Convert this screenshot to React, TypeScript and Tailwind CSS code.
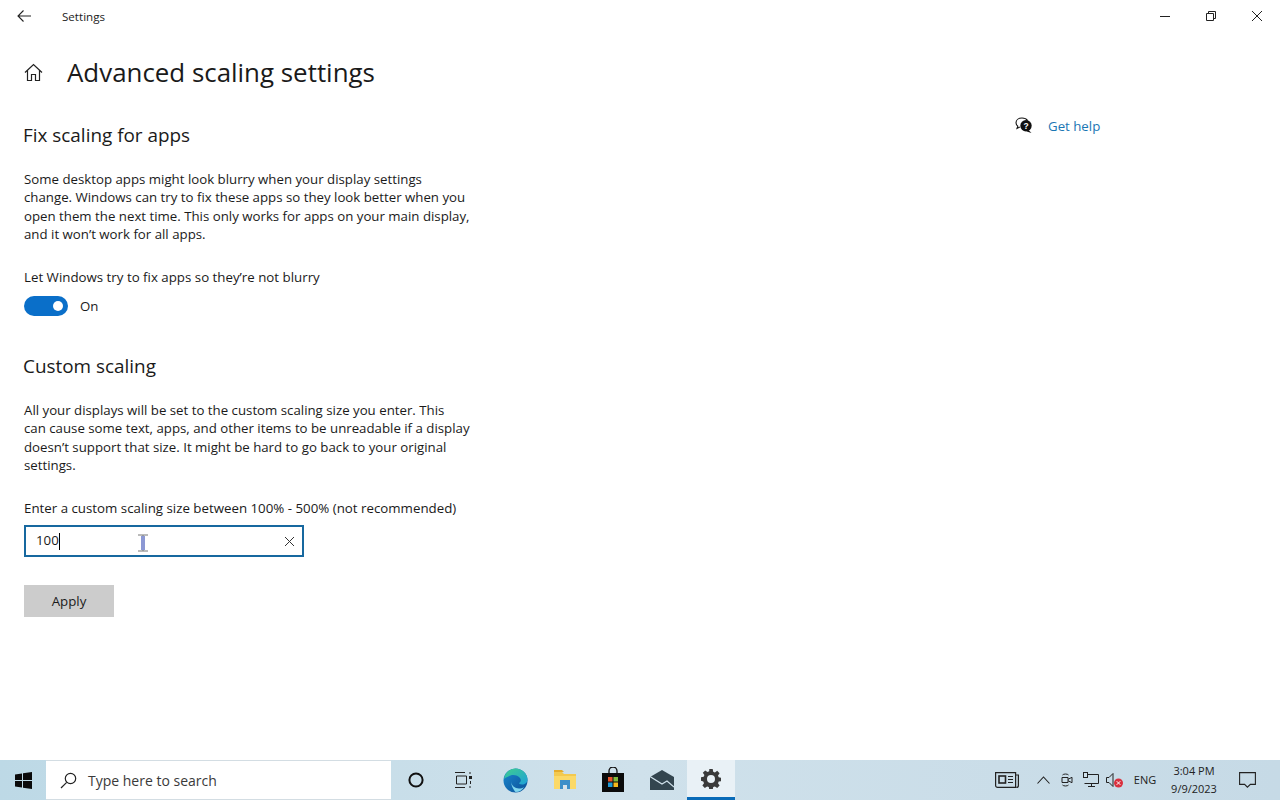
import React from "react";

const Para = ({ lines }: { lines: string[] }) => (
  <p className="text-[13.25px] leading-[18.4px] text-[#1a1a1a]">
    {lines.map((l) => (
      <span key={l} className="block whitespace-nowrap">{l}</span>
    ))}
  </p>
);

const Slot = ({ w, children, className = "" }: { w: string; children: React.ReactNode; className?: string }) => (
  <div className={`flex h-full shrink-0 items-center justify-center ${w} ${className}`}>{children}</div>
);

export default function App() {
  return (
    <div className="flex h-[800px] w-[1280px] flex-col overflow-hidden bg-white font-['Open_Sans','Noto_Sans',sans-serif] text-[#1a1a1a]">
      {/* title bar */}
      <div className="flex h-8 shrink-0 items-center">
        <Slot w="w-[48px]">
          <svg width="16" height="14" viewBox="0 0 16 14" fill="none" stroke="#222" strokeWidth="1.1"><path d="M15 7H2M7.5 1.5 2 7l5.5 5.5" /></svg>
        </Slot>
        <span className="ml-[14px] mt-[2px] text-[11.6px] text-[#222]">Settings</span>
        <div className="ml-auto flex h-full">
          <Slot w="w-[46px]"><svg width="12" height="12" viewBox="0 0 12 12" stroke="#222" strokeWidth="1"><path d="M1 6.5h10" /></svg></Slot>
          <Slot w="w-[46px]">
            <svg width="12" height="12" viewBox="0 0 12 12" fill="none" stroke="#222" strokeWidth="1"><path d="M1.500 3.500h7v7h-7zM3.500 3.500v-2h7v7h-2" /></svg>
          </Slot>
          <Slot w="w-[46px]"><svg width="12" height="12" viewBox="0 0 12 12" fill="none" stroke="#222" strokeWidth="1"><path d="M1 1l10 10M11 1 1 11" /></svg></Slot>
        </div>
      </div>

      {/* content */}
      <div className="flex min-h-0 flex-1">
        <div className="w-[1010px] shrink-0 pl-6">
          <div className="mt-[18px] flex h-[44px] items-center">
            <svg className="mt-[1px]" width="19" height="19" viewBox="0 0 19 19" fill="none" stroke="#222" strokeWidth="1.2">
              <path d="M1 9.500 9.500 1.500 18 9.500M3.500 7.500V17.500H7.500V11.500H11.500V17.500H15.500V7.500" />
            </svg>
            <h1 className="ml-[24px] text-[25.9px] font-normal text-[#1a1a1a]">Advanced scaling settings</h1>
          </div>

          <h2 className="mt-[26px] -ml-[1px] text-[18.9px] leading-[30px] text-[#1a1a1a]">Fix scaling for apps</h2>
          <div className="mt-[20px]">
            <Para lines={[
              "Some desktop apps might look blurry when your display settings",
              "change. Windows can try to fix these apps so they look better when you",
              "open them the next time. This only works for apps on your main display,",
              "and it won’t work for all apps.",
            ]} />
          </div>
          <p className="mt-[24px] text-[13.3px] leading-[18px]">Let Windows try to fix apps so they’re not blurry</p>
          <div className="mt-[10px] flex h-5 items-center">
            <div className="flex h-5 w-11 items-center justify-end rounded-full bg-[#0a6fc9] pr-[5px]">
              <div className="h-[10px] w-[10px] rounded-full bg-white" />
            </div>
            <span className="ml-3 mt-[2px] text-[13.25px]">On</span>
          </div>

          <h2 className="mt-[35px] -ml-[1px] text-[18.9px] leading-[30px] text-[#1a1a1a]">Custom scaling</h2>
          <div className="mt-[20.3px]">
            <Para lines={[
              "All your displays will be set to the custom scaling size you enter. This",
              "can cause some text, apps, and other items to be unreadable if a display",
              "doesn’t support that size. It might be hard to go back to your original",
              "settings.",
            ]} />
          </div>
          <p className="mt-[24.7px] text-[13.3px] leading-[18px]">Enter a custom scaling size between 100% - 500% (not recommended)</p>
          <div className="relative mt-[8px] flex h-8 w-[280px] items-center border-2 border-[#17689f] pl-[10px] pr-[7px]">
            <span className="text-[13.25px]">100</span>
            <span className="h-[17px] w-px bg-black" />
            <svg className="ml-auto" width="11" height="11" viewBox="0 0 11 11" fill="none" stroke="#333" strokeWidth="1"><path d="M1 1l9 9M10 1 1 10" /></svg>
            <svg className="absolute left-[111px] top-[7px]" width="12" height="18" viewBox="0 0 12 18" fill="none">
              <path d="M1 1h10M1 17h10M6 1v16" stroke="#777" strokeWidth="1" />
              <rect x="4" y="2" width="4" height="14" fill="#8c98d4" />
            </svg>
          </div>
          <button className="mt-[28px] h-8 w-[90px] bg-[#cccccc] pt-[2px] text-[13.25px] text-[#1a1a1a]">Apply</button>
        </div>

        <div className="mt-[84px] flex h-[22px] items-start pl-[5px]">
          <svg className="mt-[1px]" width="18" height="17" viewBox="0 0 18 17">
            <path d="M7 1C3.500 1 1 3 1 5.700c0 1.400.7 2.600 1.800 3.400L2 11.500l2.800-1.400" fill="none" stroke="#111" strokeWidth="1.1" />
            <path d="M7 1c2.600 0 4.600 1 5.600 2.600" fill="none" stroke="#111" strokeWidth="1.1" />
            <circle cx="11" cy="8.700" r="5.700" fill="#111" />
            <path d="m13.500 13 3 3-4.800-1.400z" fill="#111" />
            <text x="11" y="11.600" textAnchor="middle" fontSize="8.5" fontWeight="700" fill="#fff" fontFamily="Liberation Sans">?</text>
          </svg>
          <span className="ml-[15px] text-[13.25px] leading-[20px] text-[#1a76b4]">Get help</span>
        </div>
      </div>

      {/* taskbar */}
      <div className="flex h-10 shrink-0 items-center bg-gradient-to-r from-[#bdd9e6] via-[#cfe1eb] to-[#c6dae6]">
        <Slot w="w-[46px]">
          <svg width="17" height="17" viewBox="0 0 17 17" fill="#0a0a0a"><path d="M0 2.400 7 1.400V8H0zM8 1.200 17 0v8H8zM0 9h7v6.600l-7-1zM8 9h9v8l-9-1.200z" /></svg>
        </Slot>
        <div className="flex h-full w-[345px] shrink-0 items-center border-y border-[#d3dde3] bg-white">
          <svg className="ml-[14px]" width="17" height="17" viewBox="0 0 17 17" fill="none" stroke="#222" strokeWidth="1.2"><circle cx="10.500" cy="6.500" r="5.200" /><path d="M6.700 10.300 1 16" /></svg>
          <span className="ml-[11px] text-[14px] text-[#3a3a3a]">Type here to search</span>
        </div>
        <Slot w="w-[49px]">
          <svg width="16" height="16" viewBox="0 0 16 16" fill="none" stroke="#111" strokeWidth="2"><circle cx="8" cy="8" r="6.600" /></svg>
        </Slot>
        <Slot w="w-[48px]">
          <svg width="18" height="18" viewBox="0 0 18 18" fill="none" stroke="#222" strokeWidth="1"><path d="M0 1.500h10M0 16.500h10M1.500 5h10v8h-10zM15 1v2M15 15v2" /><rect x="14" y="5" width="3" height="3" fill="#222" stroke="none" /><path d="M15.500 10v3" /></svg>
        </Slot>
        <Slot w="w-[54px]">
          <svg width="25" height="25" viewBox="0 0 25 25">
            <defs>
              <linearGradient id="e1" x1="0" y1="0" x2="1" y2="1"><stop offset="0" stopColor="#3fcf8e" /><stop offset="1" stopColor="#1fa0d8" /></linearGradient>
              <linearGradient id="e2" x1="0" y1="0" x2="1" y2="1"><stop offset="0" stopColor="#1a8ad0" /><stop offset="1" stopColor="#0c4f96" /></linearGradient>
            </defs>
            <circle cx="12.500" cy="12.500" r="12" fill="url(#e2)" />
            <path d="M1 11C2 4.500 7 .5 12.500.5c6.500 0 12 5 12 11 0 3-2.500 5-5.500 5-2 0-3-.8-3-1.500 2-1 2.500-3 1-5-2-2.500-6-3.500-9.500-2.500C5 8.500 2.500 9.500 1 11z" fill="url(#e1)" />
            <path d="M8 13c0 4.500 4 7.500 8 7.500 2 0 3.500-.5 5-1.500-1.500 3-5 5-8.500 5C11 22 8 18 8 13z" fill="#7fd6ee" />
          </svg>
        </Slot>
        <Slot w="w-[45px]">
          <svg width="24" height="22" viewBox="0 0 24 22">
            <path d="M1 3h8l2 2h12v14H1z" fill="#f3c94f" />
            <path d="M1 1h8l2 2H1z" fill="#e5ac2c" />
            <path d="M1 7h22v13H1z" fill="#fbd968" />
            <path d="M7 11h10v9H7z" fill="#3e8fc9" />
            <path d="M10 16h4v4h-4z" fill="#d9e3ea" />
          </svg>
        </Slot>
        <Slot w="w-[52px]">
          <svg width="24" height="26" viewBox="0 0 24 26">
            <path d="M8 7V4a4 4 0 0 1 8 0v3" fill="none" stroke="#111" strokeWidth="1.3" />
            <path d="M1 6h22v19H1z" fill="#0b0b0b" />
            <path d="M7 10h4.500v4.500H7z" fill="#e8552b" />
            <path d="M12.500 10H17v4.500h-4.500z" fill="#7fba3a" />
            <path d="M7 15.500h4.500V20H7z" fill="#1f9ad6" />
            <path d="M12.500 15.500H17V20h-4.500z" fill="#f6b91c" />
          </svg>
        </Slot>
        <Slot w="w-[46px]">
          <svg width="24" height="20" viewBox="0 0 24 20">
            <path d="M0 7 12 0l12 7v13H0z" fill="#33454f" />
            <path d="M0 6.500 12 14l5-3 7 6" fill="none" stroke="#d0e1eb" strokeWidth="1.2" />
          </svg>
        </Slot>
        <Slot w="w-[48px]" className="ml-[2px] border-b-[3px] border-[#0a6bb8] bg-[#e9f1f6]">
          <svg width="20" height="20" viewBox="0 0 20 20" fill="#3a3a3a">
            <path fillRule="evenodd" d="M8.300 0h3.400l.5 2.700 1.700.7 2.300-1.600 2.400 2.400-1.600 2.300.7 1.700 2.700.5v3.400l-2.700.5-.7 1.700 1.600 2.300-2.400 2.400-2.300-1.600-1.700.7-.5 2.700H8.300l-.5-2.700-1.700-.7-2.300 1.600-2.400-2.400 1.600-2.300-.7-1.700L0 11.700V8.300l2.700-.5.7-1.700-1.600-2.300 2.400-2.400 2.300 1.600 1.700-.7zM10 6a4 4 0 1 0 0 8 4 4 0 0 0 0-8z" />
          </svg>
        </Slot>

        <div className="ml-auto flex h-full items-center">
          <Slot w="w-[26px]">
            <svg width="24" height="16" viewBox="0 0 24 16" fill="none" stroke="#222" strokeWidth="1.2"><path d="M.6.6h20v14.800H2.600a2 2 0 0 1-2-2zM20.600 3h2.800v10.400a2 2 0 0 1-2 2" /><rect x="4" y="4" width="6.500" height="7" strokeWidth="1.600" /><path d="M13 4.500h5M13 7.500h5M13 10.500h5" /></svg>
          </Slot>
          <Slot w="w-[24px]" className="ml-[11px]">
            <svg width="13" height="8" viewBox="0 0 13 8" fill="none" stroke="#222" strokeWidth="1.1"><path d="m.5 7.500 6-6.500 6 6.500" /></svg>
          </Slot>
          <Slot w="w-[24px]">
            <svg width="12" height="14" viewBox="0 0 12 14" fill="none" stroke="#222" strokeWidth="1"><path d="M1 4.500h6v5H1zM7 6.300l4-2v5.400l-4-2M1.500 2c1-1.300 5-1.300 6 0M1.500 12c1 1.300 5 1.300 6 0" /></svg>
          </Slot>
          <Slot w="w-[24px]">
            <svg width="16" height="16" viewBox="0 0 16 16" fill="none" stroke="#222" strokeWidth="1"><path d="M4 2.500h11.500v9H1.500M8.500 11.500v3M5 14.500h7" /><rect x=".5" y=".5" width="4" height="5" fill="#cfe1eb" /></svg>
          </Slot>
          <Slot w="w-[24px]">
            <svg width="18" height="16" viewBox="0 0 18 16" fill="none"><path d="M.5 5.500h2.500l4-4v13l-4-4H.5z" stroke="#222" strokeWidth="1" /><circle cx="12.500" cy="11" r="4.500" fill="#d9303e" /><path d="m10.700 9.200 3.600 3.600M14.300 9.200l-3.600 3.600" stroke="#fff" strokeWidth="1" /></svg>
          </Slot>
          <Slot w="w-[36px]"><span className="text-[11px] text-[#222]">ENG</span></Slot>
          <div className="flex w-[62px] shrink-0 flex-col items-center text-[11px] leading-[18px] text-[#222]">
            <span>3:04 PM</span>
            <span>9/9/2023</span>
          </div>
          <Slot w="w-[44px]" className="mr-[11px]">
            <svg width="17" height="16" viewBox="0 0 17 16" fill="none" stroke="#222" strokeWidth="1.1"><path d="M.6.6h15.800v11.800h-5l-3 2.800-2.800-2.800H.6z" /></svg>
          </Slot>
        </div>
      </div>
    </div>
  );
}
